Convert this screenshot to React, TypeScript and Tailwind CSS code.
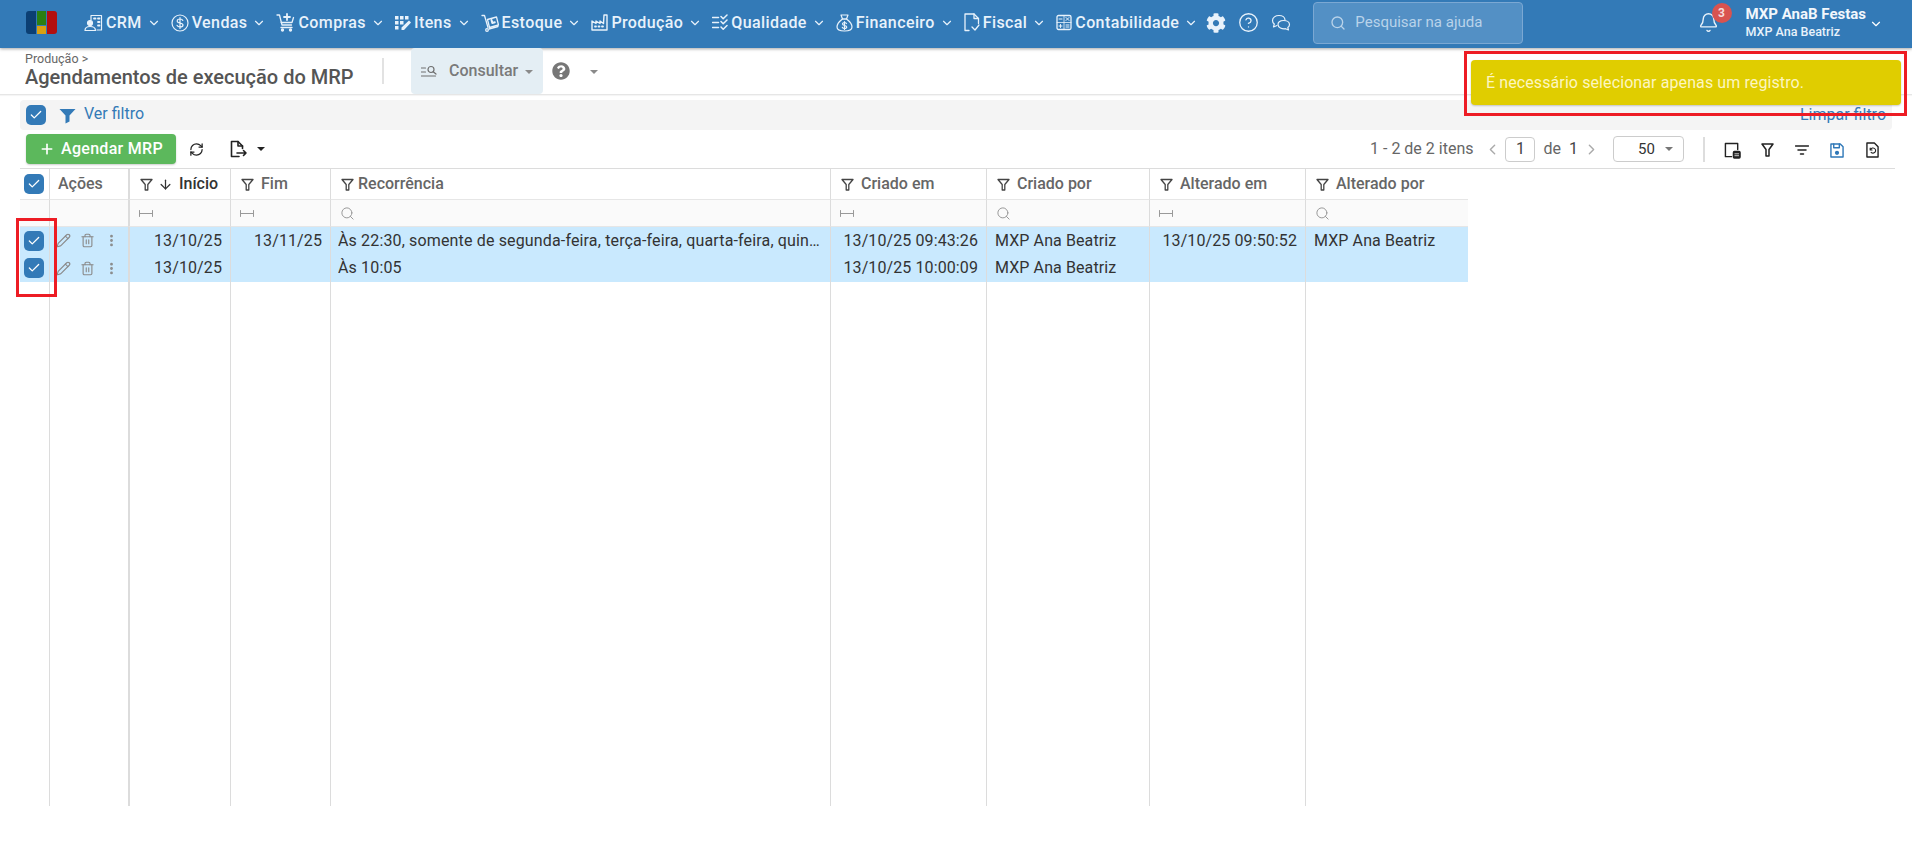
import { Bell, ChevronDown, ChevronLeft, ChevronRight, CircleHelp, Check, Search, Plus, RefreshCw, ArrowDown, Pencil, Trash2, MoreVertical } from 'lucide-react';
import { FaCog, FaQuestionCircle } from 'react-icons/fa';
import { Fragment } from 'react';
import type { ReactNode } from 'react';

const s = { fill: 'none', stroke: 'currentColor', strokeWidth: 1.5, strokeLinecap: 'round', strokeLinejoin: 'round' } as const;

function CrmIcon() {
  return (
    <svg width="19" height="18" viewBox="0 0 19 18" {...s} strokeWidth="1.2">
      <path d="M7 6V1.500h10.500V16H13" />
      <path d="M10 4.500h1.500M14 4.500h1.500M14 8h1.500M14 11.500h1.500" strokeWidth="1.800" />
      <circle cx="6" cy="9" r="2.500" fill="currentColor" />
      <path d="M1 16.500c0-3 2-4 5-4s5.500 1 5.500 4z" />
    </svg>
  );
}
function VendasIcon() {
  return (
    <svg width="18" height="18" viewBox="0 0 18 18" {...s} strokeWidth="1.200">
      <circle cx="9" cy="9" r="8" />
      <path d="M11.800 6.500C11.300 5.300 10.300 5 9 5c-1.500 0-2.800.7-2.800 2 0 3 5.800 1.200 5.800 4 0 1.400-1.400 2-3 2-1.400 0-2.500-.5-3-1.700M9 3.500v11" />
    </svg>
  );
}
function ComprasIcon() {
  return (
    <svg width="19" height="19" viewBox="0 0 19 19" {...s} strokeWidth="1.300">
      <path d="M1 2h2.500l2.500 10h9.500M5 9.500h11l1.500-5" />
      <path d="M5 14.500h11" />
      <path d="M11 1v6M8 4h6" strokeWidth="1.800" />
      <circle cx="6.500" cy="17" r="1" fill="currentColor" />
      <circle cx="14.500" cy="17" r="1" fill="currentColor" />
    </svg>
  );
}
function ItensIcon() {
  return (
    <svg width="16" height="16" viewBox="0 0 16 16" fill="currentColor">
      <rect x="0" y="1" width="3.500" height="3.500" />
      <rect x="5" y="1" width="3.500" height="3.500" />
      <rect x="10" y="1" width="3.500" height="3.500" />
      <rect x="0" y="6" width="3.500" height="3.500" />
      <rect x="5" y="6" width="3.500" height="3.500" />
      <rect x="0" y="11" width="3.500" height="3.500" />
      <path d="M14 5.500l2 2-7 7.500H6.500v-2.500z" />
    </svg>
  );
}
function EstoqueIcon() {
  return (
    <svg width="18" height="18" viewBox="0 0 18 18" {...s} strokeWidth="1.300">
      <path d="M1 1.500h2.500l3.500 12" />
      <path d="M6.500 5.500l9-2.500 2 8-9 2.500z" />
      <path d="M10.500 6l.8 3 2.500-.7" strokeWidth="2" />
      <path d="M8 15l9-2.500" />
      <circle cx="6" cy="16" r="1.300" />
    </svg>
  );
}
function ProducaoIcon() {
  return (
    <svg width="17" height="17" viewBox="0 0 17 17" {...s} strokeWidth="1.400">
      <path d="M1 16V7l4 2.500V7l4 2.500V7l3.500 2.500L13 1h3v15z" />
      <path d="M4 12.500h1M7.500 12.500h1M11 12.500h1" strokeWidth="1.800" />
    </svg>
  );
}
function QualidadeIcon() {
  return (
    <svg width="16" height="17" viewBox="0 0 16 17" {...s} strokeWidth="1.500">
      <path d="M0.500 3.500h6M0.500 8.500h6M0.500 13.500h6" />
      <path d="M9 2.500l2.200 2.200L15 1M9 7.500l2.200 2.200L15 6M9 13l2.200 2.200L15 11.500" />
    </svg>
  );
}
function FinanceiroIcon() {
  return (
    <svg width="17" height="18" viewBox="0 0 17 18" {...s} strokeWidth="1.200">
      <path d="M5 1h7l-1.500 4h-4z" />
      <path d="M6.500 5C3 7.500 1 10.500 1 13c0 2.500 2 4 7.500 4s7.500-1.500 7.500-4c0-2.500-2-5.500-5.500-8z" />
      <path d="M10.500 9.500C10 8.800 9.300 8.500 8.500 8.500c-1.200 0-2 .6-2 1.500 0 2 4.200 1 4.200 3 0 .9-1 1.500-2.200 1.500-1 0-1.800-.4-2.200-1.200M8.500 7.500v8" />
    </svg>
  );
}
function FiscalIcon() {
  return (
    <svg width="16" height="19" viewBox="0 0 16 19" {...s} strokeWidth="1.300">
      <path d="M5 17.500H1V1h9l4.500 4.500v5" />
      <path d="M10 1v4.500h4.500" />
      <path d="M8 14l3 3 4-5" />
    </svg>
  );
}
function ContabilidadeIcon() {
  return (
    <svg width="16" height="17" viewBox="0 0 16 17" {...s} strokeWidth="1.300">
      <rect x="1" y="1.500" width="14" height="14" rx="1.500" />
      <path d="M8 1.500v14M1 8.500h14" strokeWidth="0.800" />
      <path d="M3 5h3M10 3.500l3 3M13 3.500l-3 3M3 12h3M4.500 10.500v3M10 11h3M10 13h3" strokeWidth="1" />
    </svg>
  );
}
function ChatIcon() {
  return (
    <svg width="20" height="18" viewBox="0 0 20 18" {...s} strokeWidth="1.200">
      <path d="M8 1.500c-3.500 0-6.500 2-6.500 5 0 1.500.7 2.700 1.800 3.500L2.500 13l3.500-1.500" />
      <path d="M8 1.500c3.500 0 6 2 6 4.500" />
      <path d="M12.500 6.500c3 0 6 1.500 6 4 0 1.300-.7 2.300-1.700 3l.7 2.500-3-1.300c-3.500.5-7.500-1-7.500-4.200 0-2.500 2.500-4 5.500-4z" />
    </svg>
  );
}
function ConsultarIcon() {
  return (
    <svg width="16" height="12" viewBox="0 0 16 12" {...s} strokeWidth="1.200" className="text-[#6f6f6f]">
      <path d="M0.500 3h4M0.500 7h4M0.500 11h14" />
      <circle cx="10" cy="4.500" r="3" />
      <path d="M12.200 6.700L15 9" />
    </svg>
  );
}
function ExportIcon() {
  return (
    <svg width="20" height="20" viewBox="0 0 20 20" {...s} strokeWidth="1.600">
      <path d="M11 17.500H3.500v-15H10l4.500 4.500v2.500" />
      <path d="M10 2.500V7h4.500" />
      <path d="M9 14h9M15.500 11.500L18 14l-2.500 2.500" />
    </svg>
  );
}
function SolidFilter() {
  return (
    <svg width="17" height="16" viewBox="0 0 17 16" fill="#337ab7">
      <path d="M0.500 1h16l-6 6.500v6l-4 2V7.500z" />
    </svg>
  );
}
function LineFilter() {
  return (
    <svg width="13" height="13" viewBox="0 0 13 13" {...s} strokeWidth="1.300" className="shrink-0 text-[#444]">
      <path d="M1 1.500h11l-4.200 5v5.500H5.200V6.500z" />
    </svg>
  );
}
function RangeIcon() {
  return (
    <svg width="14" height="7" viewBox="0 0 14 7" className="text-[#999]" {...s} strokeWidth="1">
      <path d="M0.500 0.500v6M13.500 0.500v6M0.500 3.500h13" />
    </svg>
  );
}

function Logo() {
  return (
    <div className="flex h-[23px] w-[31px] gap-px overflow-hidden rounded-[3px]">
      <div className="w-[10px] bg-[#0c3f73]" />
      <div className="flex w-[10px] flex-col gap-px">
        <div className="h-[14px] bg-[#2b7f12]" />
        <div className="flex-1 bg-[#d9a012]" />
      </div>
      <div className="w-[10px] bg-[#b30f0f]" />
    </div>
  );
}

function Box() {
  return (
    <div className="flex h-5 w-5 items-center justify-center rounded-[5px] bg-[#337ab7]">
      <Check size={14} strokeWidth={2.2} className="text-white" />
    </div>
  );
}

const nav: { label: string; icon: ReactNode }[] = [
  { label: 'CRM', icon: <CrmIcon /> },
  { label: 'Vendas', icon: <VendasIcon /> },
  { label: 'Compras', icon: <ComprasIcon /> },
  { label: 'Itens', icon: <ItensIcon /> },
  { label: 'Estoque', icon: <EstoqueIcon /> },
  { label: 'Produção', icon: <ProducaoIcon /> },
  { label: 'Qualidade', icon: <QualidadeIcon /> },
  { label: 'Financeiro', icon: <FinanceiroIcon /> },
  { label: 'Fiscal', icon: <FiscalIcon /> },
  { label: 'Contabilidade', icon: <ContabilidadeIcon /> },
];

const gridCols = 'grid grid-cols-[29px_79px_102px_100px_500px_156px_163px_156px_163px]';

const head = [
  { label: 'Início', sort: true },
  { label: 'Fim' },
  { label: 'Recorrência', tight: true },
  { label: 'Criado em' },
  { label: 'Criado por' },
  { label: 'Alterado em' },
  { label: 'Alterado por' },
];

const rows = [
  {
    start: '13/10/25',
    end: '13/11/25',
    rec: 'Às 22:30, somente de segunda-feira, terça-feira, quarta-feira, quinta-feira e sexta-feira',
    created: '13/10/25 09:43:26',
    by: 'MXP Ana Beatriz',
    changed: '13/10/25 09:50:52',
    changedBy: 'MXP Ana Beatriz',
  },
  { start: '13/10/25', end: '', rec: 'Às 10:05', created: '13/10/25 10:00:09', by: 'MXP Ana Beatriz', changed: '', changedBy: '' },
];

const cell = 'border-l border-[#dcdcdc]';

export default function App() {
  return (
    <div className="relative h-[855px] w-[1912px] overflow-hidden bg-white font-['Roboto',sans-serif] text-[16px] text-[#333]">
      {/* barra azul */}
      <header className="flex h-[48px] items-center bg-[#337ab7] pb-[3px] pl-[26px] pr-[29px] text-white shadow-[0_1px_3px_rgba(0,0,0,0.35)]">
        <Logo />
        <nav className="ml-[27px] flex items-center gap-[10px]">
          {nav.map((n) => (
            <div key={n.label} className="flex items-center text-[16px] font-medium tracking-[0.4px] text-[#e8f2fb]">
              {n.icon}
              <span className="ml-[3px]">{n.label}</span>
              <ChevronDown size={14} strokeWidth={2} className="ml-[5px]" />
            </div>
          ))}
        </nav>
        <FaCog size={20} className="ml-[8px] text-[#e8f2fb]" />
        <CircleHelp size={21} strokeWidth={1.5} className="ml-[12px] text-[#e8f2fb]" />
        <div className="ml-[12px] text-[#e8f2fb]"><ChatIcon /></div>
        <div className="ml-[22px] flex h-[42px] w-[210px] items-center rounded-[4px] border border-[#7ba8d3] bg-[#5390c5] pl-[16px] text-[#b9d3ea]">
          <Search size={16} strokeWidth={2} />
          <span className="ml-[9px] text-[15px]">Pesquisar na ajuda</span>
        </div>
        <div className="relative ml-auto text-[#e8f2fb]">
          <Bell size={21} strokeWidth={1.6} />
          <span className="absolute -right-[13px] -top-[9px] flex h-[20px] w-[20px] items-center justify-center rounded-full bg-[#d9534f] text-[12px] font-bold text-[#f5dcdc]">3</span>
        </div>
        <div className="ml-[27px] flex flex-col leading-[18px]">
          <span className="text-[15px] font-bold text-[#f2f7fc]">MXP AnaB Festas</span>
          <span className="text-[12.500px] font-medium text-[#e8f2fb]">MXP Ana Beatriz</span>
        </div>
        <ChevronDown size={14} strokeWidth={2} className="ml-[3px] mt-[3px]" />
      </header>

      {/* titulo */}
      <div className="flex h-[47px] items-center border-b border-[#e6e6e6] pl-[25px] shadow-[0_1px_1px_rgba(0,0,0,0.04)]">
        <div className="w-[329px]">
          <div className="text-[12.500px] leading-[12px] text-[#666]">Produção &gt;</div>
          <div className="text-[20px] font-medium leading-[24px] text-[#555]">Agendamentos de execução do MRP</div>
        </div>
        <div className="ml-[28px] h-[26px] w-[2px] bg-[#e2e2e2]" />
        <div className="ml-[27px] flex h-[46px] w-[132px] items-center rounded-[4px] bg-[#e4eef4] pl-[10px]">
          <ConsultarIcon />
          <span className="ml-[12px] text-[16px] font-medium text-[#7a7a7a]">Consultar</span>
          <span className="ml-[7px] mt-[2px] h-0 w-0 border-x-[4px] border-t-[4px] border-x-transparent border-t-[#8a8a8a]" />
        </div>
        <FaQuestionCircle size={18} className="ml-[9px] text-[#777]" />
        <span className="ml-[20px] mt-[2px] h-0 w-0 border-x-[4px] border-t-[4px] border-x-transparent border-t-[#8a8a8a]" />
      </div>

      {/* filtro */}
      <div className="mx-[20px] mt-[5px] flex h-[30px] items-center rounded-[4px] bg-[#f4f4f4] pl-[6px] pr-[6px]">
        <Box />
        <div className="ml-[13px] mt-[2px]"><SolidFilter /></div>
        <span className="ml-[8px] -mt-[3px] text-[16px] text-[#337ab7]">Ver filtro</span>
        <span className="ml-auto text-[16px] text-[#337ab7]">Limpar filtro</span>
      </div>

      {/* ferramentas */}
      <div className="mx-[20px] mt-[4px] flex h-[30px] items-center pl-[6px]">
        <button className="flex h-[30px] w-[150px] items-center rounded-[4px] bg-[#5cb85c] pl-[13px] text-[16px] font-medium tracking-[0.3px] text-white shadow-[0_1px_2px_rgba(0,0,0,0.2)]">
          <Plus size={16} strokeWidth={2.5} />
          <span className="ml-[6px]">Agendar MRP</span>
        </button>
        <RefreshCw size={15} strokeWidth={2} className="ml-[13px] text-[#222]" />
        <div className="ml-[24px] text-[#222]"><ExportIcon /></div>
        <span className="ml-[9px] h-0 w-0 border-x-[4px] border-t-[4px] border-x-transparent border-t-[#222]" />
        <span className="ml-auto text-[16px] text-[#666]">1 - 2 de 2 itens</span>
        <ChevronLeft size={17} className="ml-[11px] text-[#aaa]" />
        <div className="ml-[4px] flex h-[25px] w-[30px] items-center justify-center rounded-[4px] border border-[#ccc] text-[16px] text-[#444]">1</div>
        <span className="ml-[8px] text-[16px] text-[#666]">de</span>
        <span className="ml-[8px] text-[16px] text-[#444]">1</span>
        <ChevronRight size={17} className="ml-[5px] text-[#aaa]" />
        <div className="ml-[13px] flex h-[26px] w-[71px] items-center rounded-[4px] border border-[#ccc] pl-[24px] text-[15px] text-[#333]">
          50
          <span className="ml-[10px] h-0 w-0 border-x-[4px] border-t-[4px] border-x-transparent border-t-[#777]" />
        </div>
        <div className="ml-[19px] h-[25px] w-[2px] bg-[#ddd]" />
        <svg width="17" height="17" viewBox="0 0 18 18" {...s} className="ml-[19px] mt-[2px] text-[#222]">
          <path d="M8 15.500H1.500V1.500h13v6.500" />
          <rect x="10" y="10" width="7" height="7" rx="1" fill="currentColor" />
          <path d="M11.500 12.500h4M11.500 14.500h4" stroke="#fff" strokeWidth="0.800" />
        </svg>
        <svg width="13" height="14" viewBox="0 0 13 14" {...s} className="ml-[20px] mt-[2px] text-[#222]">
          <path d="M1 1h11L8 6.500V13H5V6.500z" />
        </svg>
        <svg width="14" height="10" viewBox="0 0 14 10" {...s} className="ml-[21px] mt-[2px] text-[#222]">
          <path d="M0.500 1h13M3 5h8M5.500 9h3" />
        </svg>
        <svg width="14" height="15" viewBox="0 0 15 16" {...s} className="ml-[21px] mt-[2px] text-[#2f78b8]">
          <path d="M1 1h10l3 3v11H1z" />
          <path d="M4 1v4h6V1" />
          <circle cx="7.500" cy="10.500" r="1.500" fill="currentColor" />
        </svg>
        <svg width="13" height="16" viewBox="0 0 14 17" {...s} className="ml-[22px] mt-[2px] text-[#222]">
          <path d="M1 1h8l4 4v11H1z" />
          <path d="M5 8a2.800 2.800 0 1 1 .5 3M4.500 6.500V8.500h2" strokeWidth="1.200" />
        </svg>
        <span className="w-[13px]" />
      </div>

      {/* tabela */}
      <div className="ml-[20px] mt-[4px] h-[638px] w-[1875px] border-t border-[#dcdcdc]">
        <div className={gridCols}>
          <div className="flex h-[30px] items-center pl-[4px]"><Box /></div>
          <div className={`${cell} flex h-[30px] items-center pl-[8px] font-medium text-[#666]`}>Ações</div>
          {head.map((h, i) => (
            <div key={h.label} className={`${i === 0 ? 'border-l-2 border-[#dcdcdc]' : cell} flex h-[30px] items-center pl-[10px] font-medium ${h.sort ? 'text-[#333]' : 'text-[#666]'}`}>
              <LineFilter />
              {h.sort && <ArrowDown size={15} strokeWidth={2} className="ml-[5px] text-[#333]" />}
              <span className={h.tight ? 'ml-[4px]' : h.sort ? 'ml-[6px]' : 'ml-[7px]'}>{h.label}</span>
            </div>
          ))}
          {/* linha de busca */}
          <div className="h-[28px] border-y border-[#e6e6e6] bg-[#fafafa]" />
          <div className={`${cell} h-[28px] border-y border-y-[#e6e6e6] bg-[#fafafa]`} />
          {head.map((h, i) => (
            <div key={h.label} className={`${i === 0 ? 'border-l-2 border-[#dcdcdc]' : cell} flex h-[28px] items-center border-y border-y-[#e6e6e6] bg-[#fafafa] pl-[9px]`}>
              {i === 0 || i === 1 || i === 3 || i === 5 ? <RangeIcon /> : <Search size={15} strokeWidth={1.6} className="text-[#999]" />}
            </div>
          ))}
          {rows.map((r) => (
            <Fragment key={r.created}>
              <div className="flex h-[27.500px] items-center bg-[#c9e9fe] pl-[4px]"><Box /></div>
              <div className={`${cell} flex h-[27.500px] items-center bg-[#c9e9fe] pl-[6px] text-[#8a8a8a]`}>
                <Pencil size={15} strokeWidth={1.8} />
                <Trash2 size={15} strokeWidth={1.8} className="ml-[9px]" />
                <MoreVertical size={15} strokeWidth={2.5} className="ml-[9px]" />
              </div>
              <div className="flex h-[27.500px] items-center justify-end border-l-2 border-[#dcdcdc] bg-[#c9e9fe] pr-[8px] tracking-[0.1px]">{r.start}</div>
              <div className={`${cell} flex h-[27.500px] items-center justify-end bg-[#c9e9fe] pr-[8px] tracking-[0.1px]`}>{r.end}</div>
              <div className={`${cell} flex h-[27.500px] items-center bg-[#c9e9fe] px-[7px] tracking-[0.15px]`}><span className="truncate">{r.rec}</span></div>
              <div className={`${cell} flex h-[27.500px] items-center justify-end bg-[#c9e9fe] pr-[8px] tracking-[0.1px]`}>{r.created}</div>
              <div className={`${cell} flex h-[27.500px] items-center bg-[#c9e9fe] pl-[8px] tracking-[0.1px]`}>{r.by}</div>
              <div className={`${cell} flex h-[27.500px] items-center justify-end bg-[#c9e9fe] pr-[8px] tracking-[0.1px]`}>{r.changed}</div>
              <div className={`${cell} flex h-[27.500px] items-center bg-[#c9e9fe] pl-[8px] tracking-[0.1px]`}>{r.changedBy}</div>
            </Fragment>
          ))}
          <div className="h-[524px]" />
          <div className={`${cell} h-[524px]`} />
          <div className="h-[524px] border-l-2 border-[#dcdcdc]" />
          <div className={`${cell} h-[524px]`} />
          <div className={`${cell} h-[524px]`} />
          <div className={`${cell} h-[524px]`} />
          <div className={`${cell} h-[524px]`} />
          <div className={`${cell} h-[524px]`} />
          <div className={`${cell} h-[524px]`} />
        </div>
      </div>

      {/* aviso e marcacoes sobre a pagina */}
      <div className="absolute left-[1471px] top-[60px] flex h-[45px] w-[430px] items-center rounded-[4px] bg-[#e0cd00] pl-[15px] text-[16px] tracking-[0.1px] text-[#fdf6c0] shadow-[0_1px_2px_rgba(0,0,0,0.2)]">
        É necessário selecionar apenas um registro.
      </div>
      <div className="absolute left-[1464px] top-[51px] h-[65px] w-[443px] border-[3px] border-[#ed1c24]" />
      <div className="absolute left-[16px] top-[218px] h-[79px] w-[41px] border-[3px] border-[#ed1c24]" />
    </div>
  );
}
